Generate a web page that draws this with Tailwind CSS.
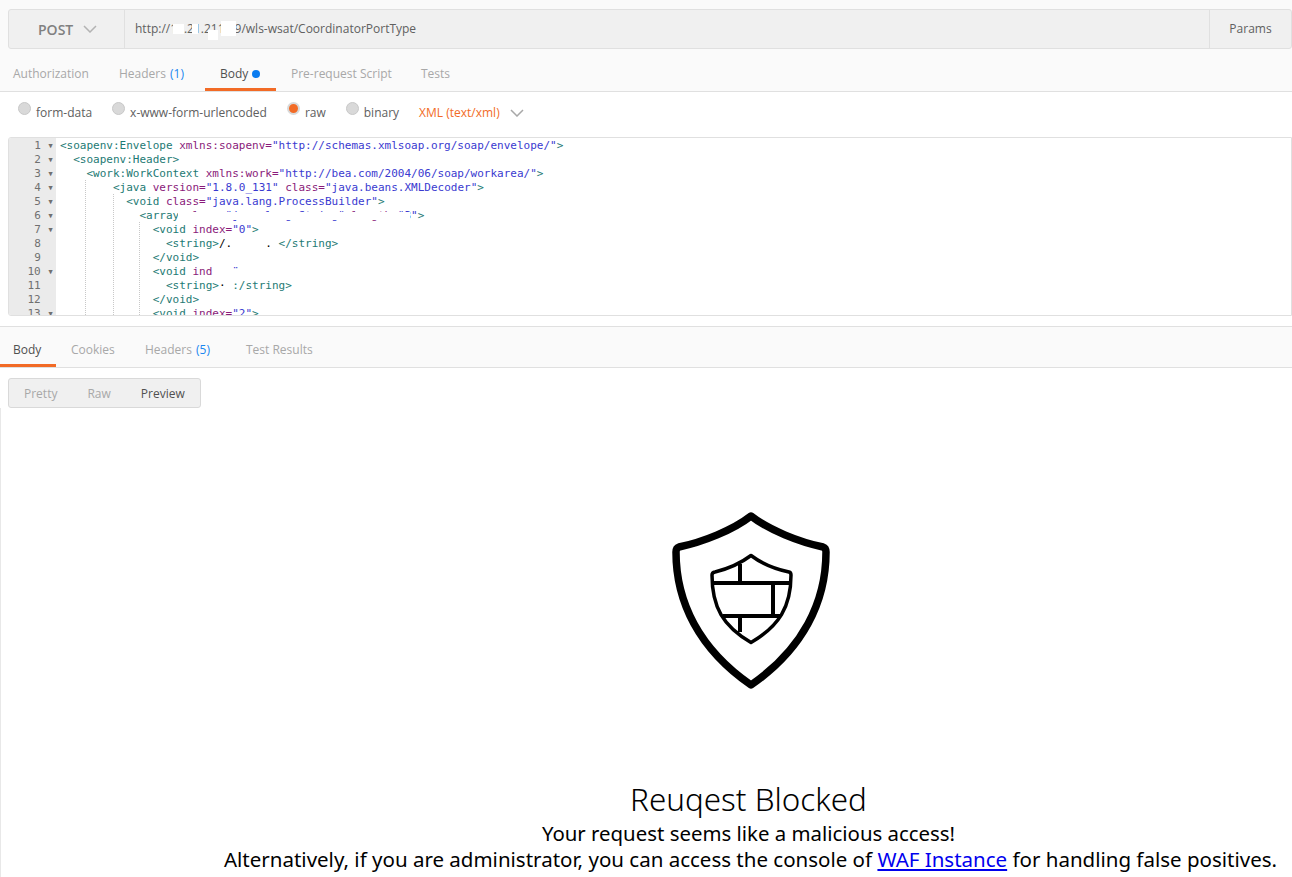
<!DOCTYPE html>
<html lang="en">
<head>
    <meta charset="UTF-8" />
    <title>Request Blocked</title>
    <script src="https://cdn.jsdelivr.net/npm/@tailwindcss/browser@4"></script>
</head>
<body class="bg-white h-[877px] overflow-hidden flex flex-col font-['Open_Sans',sans-serif] text-[12px] text-[#808080]">

    <!-- request url bar -->
    <section class="bg-[#fafafa] pt-[9px] pl-2 h-[49px]">
        <div class="flex h-10 bg-[#f0f0f0] border border-[#e0e0e0] rounded-[3px]">
            <div class="w-[116px] shrink-0 flex items-center pl-[29px] gap-[10px] border-r border-[#e0e0e0] text-[14px] font-semibold">
                <span>POST</span>
                <svg class="w-[14px] h-2" viewBox="0 0 14 8" fill="none" stroke="#b3b3b3" stroke-width="1.500"><path d="M1 1l6 6 6-6" /></svg>
            </div>
            <div class="relative flex-1 flex items-center pl-[10px] text-[#606060]">
                <span>http://10.21.211.59/wls-wsat/CoordinatorPortType</span>
                <span class="absolute left-[48px] top-[14px] w-[11px] h-[10px] bg-white"></span>
                <span class="absolute left-[67px] top-[14px] w-[6px] h-[10px] bg-white"></span>
                <span class="absolute left-[83px] top-[20px] w-[10px] h-[10px] bg-white"></span>
                <span class="absolute left-[96px] top-[11px] w-[15px] h-[15px] bg-white"></span>
            </div>
            <div class="w-[82px] shrink-0 flex items-center justify-center border-l border-[#e0e0e0] text-[#606060]">Params</div>
        </div>
    </section>

    <!-- request tabs -->
    <nav class="bg-[#fafafa] h-[43px] flex border-b border-[#e0e0e0] text-[#a8a8a8]">
        <div class="w-[104px] pl-[13px] pt-4">Authorization</div>
        <div class="w-[101px] pl-[15px] pt-4">Headers <span class="pl-px text-[#1a87f0]">(1)</span></div>
        <div class="w-[71px] h-[42px] pl-[15px] pt-4 border-b-[3px] border-[#f26b26] text-[#505050] flex gap-1">Body <span class="w-2 h-2 mt-[5px] rounded-full bg-[#0a7cf0]"></span></div>
        <div class="w-[131px] pl-[15px] pt-4 whitespace-nowrap">Pre-request Script</div>
        <div class="pl-[14px] pt-4">Tests</div>
    </nav>

    <!-- body type options -->
    <div class="h-[45px] flex items-center pb-[4px] text-[#606060]">
        <div class="flex items-center pl-[18px] gap-[5px]">
            <span class="w-[13px] h-[13px] -mt-[8px] rounded-full bg-[#d9d9d9] border border-[#c8c8c8]"></span><span>form-data</span>
        </div>
        <div class="flex items-center pl-[20px] gap-[5px]">
            <span class="w-[13px] h-[13px] -mt-[8px] rounded-full bg-[#d9d9d9] border border-[#c8c8c8]"></span><span>x-www-form-urlencoded</span>
        </div>
        <div class="flex items-center pl-[20px] gap-[5px]">
            <span class="w-[13px] h-[13px] -mt-[8px] rounded-full bg-[#f26b26] border-2 border-[#d9d9d9]"></span><span>raw</span>
        </div>
        <div class="flex items-center pl-[20px] gap-[5px]">
            <span class="w-[13px] h-[13px] -mt-[8px] rounded-full bg-[#d9d9d9] border border-[#c8c8c8]"></span><span>binary</span>
        </div>
        <span class="ml-[20px] text-[#f26b26]">XML (text/xml)</span>
        <svg class="w-[14px] h-2 ml-[10px]" viewBox="0 0 14 8" fill="none" stroke="#a8a8a8" stroke-width="1.500"><path d="M1 1l6 6 6-6" /></svg>
    </div>

    <!-- code editor -->
    <div class="ml-2 h-[179px] flex border border-[#e0e0e0] rounded-l-[3px] overflow-hidden font-['DejaVu_Sans_Mono',monospace] text-[11px] leading-[14px]">
        <div class="w-[47px] shrink-0 pt-px bg-[#ebebeb] text-[#707070] text-right pr-[2px] *:whitespace-pre">
            <div>1 ▾</div>
            <div>2 ▾</div>
            <div>3 ▾</div>
            <div>4 ▾</div>
            <div>5 ▾</div>
            <div>6 ▾</div>
            <div>7 ▾</div>
            <div>8  </div>
            <div>9  </div>
            <div>10 ▾</div>
            <div>11  </div>
            <div>12  </div>
            <div>13 ▾</div>
        </div>
        <div class="relative flex-1 pt-px pl-[4px] text-[#1d7a74] *:whitespace-pre">
            <div>&lt;soapenv:Envelope <span class="text-[#8a1a7a]">xmlns:soapenv=</span><span class="text-[#3a3ad0]">"http://schemas.xmlsoap.org/soap/envelope/"</span>&gt;</div>
            <div>  &lt;soapenv:Header&gt;</div>
            <div>    &lt;work:WorkContext <span class="text-[#8a1a7a]">xmlns:work=</span><span class="text-[#3a3ad0]">"http://bea.com/2004/06/soap/workarea/"</span>&gt;</div>
            <div>        &lt;java <span class="text-[#8a1a7a]">version=</span><span class="text-[#3a3ad0]">"1.8.0_131"</span> <span class="text-[#8a1a7a]">class=</span><span class="text-[#3a3ad0]">"java.beans.XMLDecoder"</span>&gt;</div>
            <div>          &lt;void <span class="text-[#8a1a7a]">class=</span><span class="text-[#3a3ad0]">"java.lang.ProcessBuilder"</span>&gt;</div>
            <div>            &lt;array <span class="text-[#8a1a7a]">class=</span><span class="text-[#3a3ad0]">"java.lang.String"</span> <span class="text-[#8a1a7a]">length=</span><span class="text-[#3a3ad0]">"3"</span>&gt;</div>
            <div>              &lt;void <span class="text-[#8a1a7a]">index=</span><span class="text-[#3a3ad0]">"0"</span>&gt;</div>
            <div>                &lt;string&gt;<span class="text-black">/.     . </span>&lt;/string&gt;</div>
            <div>              &lt;/void&gt;</div>
            <div>              &lt;void <span class="text-[#8a1a7a]">ind</span><span class="text-[#3a3ad0]">   ¨</span></div>
            <div>                &lt;string&gt;<span class="text-black">· </span>:/string&gt;</div>
            <div>              &lt;/void&gt;</div>
            <div>              &lt;void <span class="text-[#8a1a7a]">index=</span><span class="text-[#3a3ad0]">"2"</span>&gt;</div>
            <span class="absolute left-[122px] top-[74px] w-[232px] h-[8px] bg-white"></span>
            <span class="absolute left-[29px] top-[42px] bottom-0 border-l border-dotted border-[#c8c8c8]"></span>
            <span class="absolute left-[57px] top-[56px] bottom-0 border-l border-dotted border-[#c8c8c8]"></span>
            <span class="absolute left-[83px] top-[84px] bottom-0 border-l border-dotted border-[#c8c8c8]"></span>
        </div>
    </div>

    <div class="h-[10px]"></div>

    <!-- response tabs -->
    <nav class="bg-[#fafafa] h-[42px] flex border-y border-[#e0e0e0] text-[#a8a8a8]">
        <div class="w-[56px] h-[40px] pl-[13px] pt-[14px] border-b-[3px] border-[#f26b26] text-[#505050]">Body</div>
        <div class="w-[74px] pl-[15px] pt-[14px]">Cookies</div>
        <div class="w-[101px] pl-[15px] pt-[14px]">Headers <span class="pl-px text-[#1a87f0]">(5)</span></div>
        <div class="pl-[15px] pt-[14px]">Test Results</div>
    </nav>

    <!-- response view mode -->
    <div class="pl-2 pt-[10px]">
        <div class="w-[193px] h-[30px] flex items-center pt-px bg-[#f0f0f0] border border-[#d9d9d9] rounded-[3px] text-[#a8a8a8]">
            <span class="pl-[15px]">Pretty</span>
            <span class="pl-[30px]">Raw</span>
            <span class="pl-[30px] text-[#505050]">Preview</span>
        </div>
    </div>

    <!-- blocked page preview -->
    <main class="flex-1 pl-[208px] flex flex-col items-center border-l border-[#e8e8e8] text-black font-['Noto_Sans',sans-serif]">
        <svg class="w-[160px] h-[178px] mt-[104px]" viewBox="0 0 160 178" fill="none" stroke="#000" stroke-linejoin="round">
            <path stroke-width="7.500" d="M80 4C62 18 32 30 8 35Q5 36 5 40C5 90 28 137 80 173C132 137 155 90 155 40Q155 36 152 35C128 30 98 18 80 4Z" />
            <path stroke-width="3.500" d="M80 43.500C70 51 56 57 44 60Q41 60.500 41 63C41 95 52 114 80 130.500C108 114 120 95 120 63Q120 60.500 118 60C104 57 90 51 80 43.500Z" />
            <path stroke-width="4" d="M42 71H120M52 104H110M102 71V104M69 52V71M69 104V120" />
        </svg>
        <h1 class="mt-[91px] text-[31.400px] font-light leading-[36px] -translate-x-[2px]">Reuqest Blocked</h1>
        <p class="text-[20.400px] leading-[26px] mt-[3px] -translate-x-[2px]">Your request seems like a malicious access!</p>
        <p class="text-[20.500px] leading-[26px] whitespace-nowrap">Alternatively, if you are administrator, you can access the console of <a href="#" class="text-[#0000ee] underline">WAF Instance</a> for handling false positives.</p>
    </main>
</body>
</html>
